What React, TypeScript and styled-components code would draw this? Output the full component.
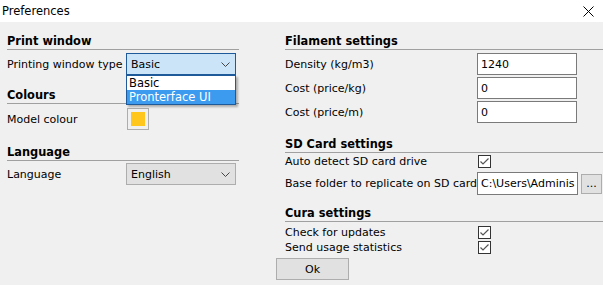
import * as React from 'react';
import styled, { createGlobalStyle } from 'styled-components';

const GlobalStyle = createGlobalStyle`
  html, body {
    margin: 0;
    padding: 0;
    background: #f0f0f0;
  }
  body {
    font-family: "DejaVu Sans", "Liberation Sans", sans-serif;
    font-size: 11px;
    color: #000;
  }
`;

const Window = styled.div`
  width: 603px;
  height: 285px;
  background: #f0f0f0;
  overflow: hidden;
`;

const TitleBar = styled.div`
  height: 22px;
  background: #fff;
  display: flex;
  align-items: center;
  justify-content: space-between;
  padding-left: 2px;
  font-size: 11.5px;
`;

const CloseButton = styled.div`
  width: 30px;
  height: 22px;
  display: flex;
  align-items: center;
  justify-content: center;
`;

const Body = styled.div`
  display: flex;
  gap: 46px;
  padding: 11px 0 0 7px;
`;

const Column = styled.div<{ $width: number }>`
  width: ${p => p.$width}px;
  display: flex;
  flex-direction: column;
`;

const Heading = styled.div<{ $top?: number }>`
  font-weight: bold;
  font-size: 11.4px;
  line-height: 16px;
  border-bottom: 1px solid #a0a0a0;
  margin-top: ${p => p.$top ?? 0}px;
`;

const Row = styled.div<{ $top?: number; $height?: number; $label: number }>`
  display: grid;
  grid-template-columns: ${p => p.$label}px auto;
  align-items: center;
  height: ${p => p.$height ?? 22}px;
  margin-top: ${p => p.$top ?? 2}px;
  white-space: nowrap;
`;

const ComboWrap = styled.div`
  position: relative;
  width: 110px;
  height: 22px;
`;

const Combo = styled.div<{ $focused?: boolean }>`
  box-sizing: border-box;
  width: 110px;
  height: 22px;
  display: flex;
  align-items: center;
  justify-content: space-between;
  padding: 0 5px 0 4px;
  background: ${p => (p.$focused ? '#cce4f7' : '#e1e1e1')};
  border: 1px solid ${p => (p.$focused ? '#1e5a9a' : '#adadad')};
`;

const DropList = styled.div`
  position: absolute;
  left: 0;
  top: 22px;
  box-sizing: border-box;
  width: 110px;
  height: 30px;
  background: #fff;
  border: 1px solid #1e5a9a;
  box-shadow: 2px 2px 2px rgba(0, 0, 0, 0.28);
  z-index: 2;
`;

const DropItem = styled.div<{ $selected?: boolean }>`
  height: 14px;
  line-height: 14px;
  padding-left: 2px;
  font-size: 11.5px;
  background: ${p => (p.$selected ? '#3c9bef' : '#fff')};
  color: ${p => (p.$selected ? '#fff' : '#000')};
`;

const Swatch = styled.div<{ $color: string }>`
  box-sizing: border-box;
  width: 22px;
  height: 22px;
  margin-left: 1px;
  padding: 3px;
  border: 1px solid #adadad;
  background: #f0f0f0;
  &::after {
    content: '';
    display: block;
    width: 100%;
    height: 100%;
    background: ${p => p.$color};
  }
`;

const TextBox = styled.div<{ $width?: number; $height?: number }>`
  box-sizing: border-box;
  width: ${p => p.$width ?? 100}px;
  height: ${p => p.$height ?? 22}px;
  display: flex;
  align-items: center;
  padding-left: 3px;
  background: #fff;
  border: 1px solid #7a7a7a;
  overflow: hidden;
  white-space: nowrap;
`;

const FieldGroup = styled.div`
  display: flex;
  align-items: center;
  gap: 3px;
`;

const Button = styled.div<{ $width: number; $height: number }>`
  box-sizing: border-box;
  width: ${p => p.$width}px;
  height: ${p => p.$height}px;
  display: flex;
  align-items: center;
  justify-content: center;
  background: #e1e1e1;
  border: 1px solid #adadad;
`;

const CheckBox = styled.div`
  box-sizing: border-box;
  width: 13px;
  height: 13px;
  margin-left: 1px;
  border: 1px solid #333;
  background: #fff;
  display: flex;
  align-items: center;
  justify-content: center;
`;

const Footer = styled.div`
  margin: 3px 0 0 -9px;
`;

const Chevron = () => (
  <svg width="9" height="5" viewBox="0 0 9 5">
    <path d="M0.5 0.5 L4.5 4.5 L8.5 0.5" fill="none" stroke="#444" strokeWidth="1" />
  </svg>
);

const Check = () => (
  <svg width="11" height="11" viewBox="0 0 11 11">
    <path d="M1.5 5.5 L4 8 L9.5 2.5" fill="none" stroke="#555" strokeWidth="1.2" />
  </svg>
);

const CloseIcon = () => (
  <svg width="11" height="11" viewBox="0 0 11 11">
    <path d="M0.5 0.5 L10.5 10.5 M10.5 0.5 L0.5 10.5" stroke="#000" strokeWidth="1" />
  </svg>
);

export default function App() {
  return (
    <Window>
      <GlobalStyle />
      <TitleBar>
        <span>Preferences</span>
        <CloseButton>
          <CloseIcon />
        </CloseButton>
      </TitleBar>
      <Body>
        <Column $width={232}>
          <Heading>Print window</Heading>
          <Row $label={119} $top={3}>
            <span>Printing window type</span>
            <ComboWrap>
              <Combo $focused>
                <span>Basic</span>
                <Chevron />
              </Combo>
              <DropList>
                <DropItem>Basic</DropItem>
                <DropItem $selected>Pronterface UI</DropItem>
              </DropList>
            </ComboWrap>
          </Row>
          <Heading $top={12}>Colours</Heading>
          <Row $label={119} $top={4}>
            <span>Model colour</span>
            <Swatch $color="#ffc61e" />
          </Row>
          <Heading $top={14}>Language</Heading>
          <Row $label={119} $top={2}>
            <span>Language</span>
            <Combo>
              <span>English</span>
              <Chevron />
            </Combo>
          </Row>
        </Column>

        <Column $width={318}>
          <Heading>Filament settings</Heading>
          <Row $label={192} $top={3}>
            <span>Density (kg/m3)</span>
            <TextBox>1240</TextBox>
          </Row>
          <Row $label={192}>
            <span>Cost (price/kg)</span>
            <TextBox>0</TextBox>
          </Row>
          <Row $label={192}>
            <span>Cost (price/m)</span>
            <TextBox>0</TextBox>
          </Row>

          <Heading $top={13}>SD Card settings</Heading>
          <Row $label={192} $top={1} $height={15}>
            <span>Auto detect SD card drive</span>
            <CheckBox>
              <Check />
            </CheckBox>
          </Row>
          <Row $label={192} $top={3} $height={23}>
            <span>Base folder to replicate on SD card</span>
            <FieldGroup>
              <TextBox $width={101} $height={23}>C:\Users\Adminis</TextBox>
              <Button $width={21} $height={20}>...</Button>
            </FieldGroup>
          </Row>

          <Heading $top={10}>Cura settings</Heading>
          <Row $label={192} $top={3} $height={15}>
            <span>Check for updates</span>
            <CheckBox>
              <Check />
            </CheckBox>
          </Row>
          <Row $label={192} $top={0} $height={15}>
            <span>Send usage statistics</span>
            <CheckBox>
              <Check />
            </CheckBox>
          </Row>
          <Footer>
            <Button $width={73} $height={22}>Ok</Button>
          </Footer>
        </Column>
      </Body>
    </Window>
  );
}
